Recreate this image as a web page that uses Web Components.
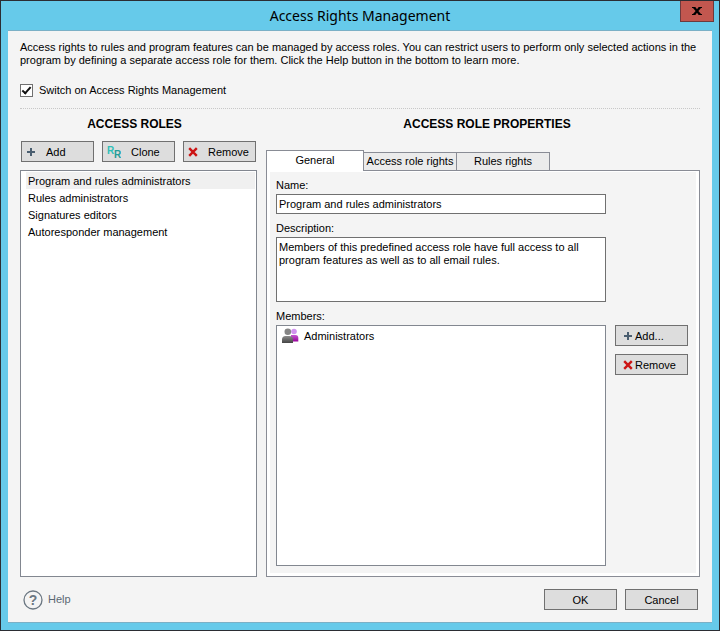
<!DOCTYPE html>
<html lang="en">
<head>
<meta charset="utf-8">
<title>Access Rights Management</title>
<style>
	html, body{
		margin:0;
		height:100%;
	}
	body{
		font:11px/13px "Liberation Sans", Arial, sans-serif;
		color:#000;
	}
</style>
</head>
<body>
<dialog-window>
	<span slot="title">Access Rights Management</span>
	<access-rights></access-rights>
</dialog-window>

<script>
// icon drawings, shared by buttons and lists
const ICONS = {
	add: `<svg width="10" height="10" viewBox="0 0 10 10"><path d="M1 5h8M5 1v8" stroke="#4a5e70" stroke-width="2"/></svg>`,
	remove: `<svg width="10" height="10" viewBox="0 0 10 10"><path d="M1.200 1.200L8.800 8.800M8.800 1.200L1.200 8.800" stroke="#cc1414" stroke-width="2.400"/></svg>`,
	clone: `<svg width="14" height="14" viewBox="0 0 14 14" font-family="Liberation Sans, sans-serif" font-weight="bold" font-size="10" aria-hidden="true"><text x="0" y="9" fill="#2fc0b8">R</text><text x="7" y="13" fill="#279c98">R</text></svg>`,
	close: `<svg width="10" height="8" viewBox="0 0 10 8"><path d="M0 0h3.300l1.700 2.200L6.700 0H10v1H9L6.400 4 9 7h1v1H6.700L5 5.800 3.300 8H0V7h1l2.600-3L1 1H0z" fill="#000"/></svg>`,
	members: `<svg width="17" height="16" viewBox="0 0 17 16">
		<defs>
			<linearGradient id="g" x2="0" y2="1"><stop stop-color="#8b8b8b"/><stop offset="1" stop-color="#454545"/></linearGradient>
			<linearGradient id="p" x2="0" y2="1"><stop stop-color="#c45ad0"/><stop offset="1" stop-color="#98009a"/></linearGradient>
		</defs>
		<circle cx="12" cy="3.500" r="2.800" fill="#d193ef"/>
		<path d="M9 7h4.500q2.800 0 2.800 3v3.500H9z" fill="url(#p)"/>
		<circle cx="5.800" cy="3.800" r="3.300" fill="#858585"/>
		<path d="M0 15v-3.500Q0 8 3.500 8h4Q11 8 11 11.500V15z" fill="url(#g)"/>
	</svg>`,
	help: `<svg width="20" height="20" viewBox="0 0 20 20" aria-hidden="true"><circle cx="10" cy="10" r="9" fill="none" stroke="#6b7782" stroke-width="1.300"/><text x="10" y="15" text-anchor="middle" font-family="Liberation Sans, sans-serif" font-weight="bold" font-size="14" fill="#6b7782">?</text></svg>`
};

class DialogWindow extends HTMLElement {
	constructor() {
		super();
		this.attachShadow({mode: "open"});
		this.shadowRoot.innerHTML = `
			<style>
				:host{
					display:flex;
					flex-direction:column;
					box-sizing:border-box;
					min-height:100vh;
					padding:0 7px 7px;
					border:1px solid #2b2d33;
					background:#66caea;
				}
				header{
					display:grid;
					grid-template-columns:1fr auto 1fr;
					height:29px;
				}
				h1{
					grid-column:2;
					margin:0;
					font:14px/29px "Noto Sans", "Open Sans", sans-serif;
				}
				.close{
					display:flex;
					justify-content:center;
					align-items:center;
					justify-self:end;
					box-sizing:border-box;
					width:34px;
					height:21px;
					margin-right:-2px;
					padding:0;
					border:1px solid #6d3a3d;
					border-top:0;
					background:#c2574f;
				}
				main{
					display:flex;
					flex:1;
					flex-direction:column;
					border-top:1px solid #7bb0c6;
					border-bottom:1px solid #7bb0c6;
					background:#f4f4f4;
				}
			</style>
			<header>
				<h1><slot name="title"></slot></h1>
				<button class="close" type="button" aria-label="Close">${ICONS.close}</button>
			</header>
			<main><slot></slot></main>
		`;
	}
}

// <push-button icon="add">Text</push-button>
// "wide" sets the text further apart from the icon
class PushButton extends HTMLElement {
	constructor() {
		super();
		this.attachShadow({mode: "open"});
	}

	connectedCallback() {
		this.shadowRoot.innerHTML = `
			<style>
				:host{
					display:block;
					width:73px;
				}
				button{
					display:flex;
					justify-content:center;
					align-items:center;
					gap:2px;
					box-sizing:border-box;
					width:100%;
					height:21px;
					padding:0;
					border:1px solid #707070;
					background:#ddd;
					color:#000;
					font:inherit;
				}
				:host([icon]) button{
					justify-content:flex-start;
					padding-left:7px;
				}
				:host([wide]) button{
					gap:10px;
					padding-left:4px;
				}
				svg{
					display:block;
					flex:none;
				}
				span{
					padding-top:1px;
				}
			</style>
			<button type="button">${ICONS[this.getAttribute('icon')] || ''}<span><slot></slot></span></button>
		`;
	}
}

class ItemList extends HTMLElement {
	constructor() {
		super();
		this.attachShadow({mode: "open"});
	}

	connectedCallback() {
		const icon = ICONS[this.getAttribute('icon')] || '';
		const items = this.getAttribute('items').split('|');
		const selected = this.getAttribute('selected');

		this.shadowRoot.innerHTML = `
			<style>
				:host{
					display:block;
					box-sizing:border-box;
					border:1px solid #828790;
					background:#fff;
				}
				ul{
					margin:0;
					padding:1px 1px 0 5px;
					list-style:none;
				}
				li{
					display:flex;
					align-items:center;
					gap:5px;
					box-sizing:border-box;
					height:17px;
					padding:2px 0 0 2px;
				}
				:host([icon]) li{
					height:18px;
					padding:0;
				}
				li[aria-selected=true]{
					background:#f0f0f0;
				}
			</style>
			<ul role="listbox" aria-label="${this.getAttribute('label')}">
				${items.map(item => `<li role="option" aria-selected="${item === selected}">${icon}${item}</li>`).join('')}
			</ul>
		`;
	}
}

class TabPanel extends HTMLElement {
	constructor() {
		super();
		this.attachShadow({mode: "open"});
	}

	connectedCallback() {
		const tabs = this.getAttribute('tabs').split('|');

		this.shadowRoot.innerHTML = `
			<style>
				:host{
					display:flex;
					flex-direction:column;
				}
				.tabs{
					display:flex;
					align-items:flex-end;
				}
				button{
					box-sizing:border-box;
					width:93px;
					height:18px;
					padding:0;
					border:1px solid #898c95;
					border-bottom:0;
					border-left:0;
					background:#ebebeb;
					color:#000;
					font:inherit;
				}
				button[aria-selected=true]{
					position:relative;
					width:98px;
					height:21px;
					margin-bottom:-1px;
					padding-bottom:2px;
					border-left:1px solid #898c95;
					background:#fff;
				}
				.panel{
					flex:1;
					padding:8px 8px 7px 6px;
					border:1px solid #898c95;
					box-shadow:inset 3px 1px #fff, inset -3px -3px #fff;
				}
			</style>
			<div class="tabs" role="tablist">
				${tabs.map((tab, i) => `<button type="button" role="tab" aria-selected="${i === 0}">${tab}</button>`).join('')}
			</div>
			<div class="panel" role="tabpanel"><slot></slot></div>
		`;
	}
}

class RoleForm extends HTMLElement {
	constructor() {
		super();
		this.attachShadow({mode: "open"});
		this.shadowRoot.innerHTML = `
			<style>
				:host{
					display:grid;
					grid-template-columns:1fr auto;
					grid-template-rows:auto auto auto auto auto 1fr;
					column-gap:9px;
					box-sizing:border-box;
					height:100%;
					padding:0 3px 3px;
				}
				label, .label{
					grid-column:1;
					margin-bottom:2px;
				}
				input, textarea{
					grid-column:1;
					box-sizing:border-box;
					width:100%;
					margin:0 0 8px;
					padding:3px 2px;
					border:1px solid #707070;
					border-radius:0;
					background:#fff;
					color:#000;
					font:inherit;
				}
				input{
					height:20px;
				}
				textarea{
					display:block;
					height:65px;
					resize:none;
				}
				item-list{
					grid-column:1;
				}
				.actions{
					display:flex;
					flex-direction:column;
					grid-column:2;
					gap:8px;
				}
			</style>
			<label for="name">Name:</label>
			<input id="name" type="text" value="Program and rules administrators">
			<label for="description">Description:</label>
			<textarea id="description">Members of this predefined access role have full access to all program features as well as to all email rules.</textarea>
			<span class="label">Members:</span>
			<item-list icon="members" label="Members" items="Administrators"></item-list>
			<div class="actions">
				<push-button icon="add">Add...</push-button>
				<push-button icon="remove">Remove</push-button>
			</div>
		`;
	}
}

class AccessRights extends HTMLElement {
	constructor() {
		super();
		this.attachShadow({mode: "open"});
		this.shadowRoot.innerHTML = `
			<style>
				:host{
					display:flex;
					flex:1;
					flex-direction:column;
					padding:10px 12px 12px;
				}
				p{
					margin:0 0 17px;
				}
				.switch{
					display:flex;
					align-items:center;
					align-self:flex-start;
					gap:6px;
				}
				.switch input{
					display:grid;
					place-items:center;
					appearance:none;
					box-sizing:border-box;
					width:13px;
					height:13px;
					margin:0;
					border:1px solid #707070;
					background:#fff;
				}
				.switch input:checked::before{
					content:"";
					width:3px;
					height:7px;
					margin-bottom:2px;
					border:solid #111;
					border-width:0 2px 2px 0;
					transform:rotate(42deg);
				}
				hr{
					width:100%;
					margin:11px 0 7px;
					border:0;
					border-top:1px dotted #c8c8c8;
				}
				h2{
					margin:0;
					font-size:12px;
					line-height:16px;
					text-align:center;
				}
				.columns{
					display:flex;
					flex:1;
					gap:9px;
				}
				section{
					display:flex;
					flex-direction:column;
					min-width:0;
				}
				.roles{
					flex:237 1 0;
				}
				.roles h2{
					padding-right:8px;
				}
				.properties{
					flex:434 1 0;
				}
				.properties h2{
					padding-left:8px;
				}
				.toolbar{
					display:flex;
					justify-content:space-between;
					margin:9px 1px 8px;
				}
				item-list{
					flex:1;
				}
				tab-panel{
					flex:1;
					margin-top:18px;
				}
				footer{
					display:flex;
					align-items:center;
					gap:8px;
					padding:12px 2px 0;
				}
				.help{
					display:flex;
					align-items:center;
					gap:5px;
					margin-right:auto;
					color:#5b6873;
					text-decoration:none;
				}
				.help svg{
					margin-left:1px;
				}
			</style>
			<p>Access rights to rules and program features can be managed by access roles. You can restrict users to perform only selected actions in the program by defining a separate access role for them. Click the Help button in the bottom to learn more.</p>
			<label class="switch"><input type="checkbox" checked>Switch on Access Rights Management</label>
			<hr>
			<div class="columns">
				<section class="roles">
					<h2>ACCESS ROLES</h2>
					<div class="toolbar">
						<push-button icon="add" wide>Add</push-button>
						<push-button icon="clone" wide>Clone</push-button>
						<push-button icon="remove" wide>Remove</push-button>
					</div>
					<item-list label="Access roles" selected="Program and rules administrators"
						items="Program and rules administrators|Rules administrators|Signatures editors|Autoresponder management"></item-list>
				</section>
				<section class="properties">
					<h2>ACCESS ROLE PROPERTIES</h2>
					<tab-panel tabs="General|Access role rights|Rules rights">
						<role-form></role-form>
					</tab-panel>
				</section>
			</div>
			<footer>
				<a class="help" href="#help">${ICONS.help}Help</a>
				<push-button>OK</push-button>
				<push-button>Cancel</push-button>
			</footer>
		`;
	}
}

customElements.define('dialog-window', DialogWindow);
customElements.define('push-button', PushButton);
customElements.define('item-list', ItemList);
customElements.define('tab-panel', TabPanel);
customElements.define('role-form', RoleForm);
customElements.define('access-rights', AccessRights);
</script>
</body>
</html>
